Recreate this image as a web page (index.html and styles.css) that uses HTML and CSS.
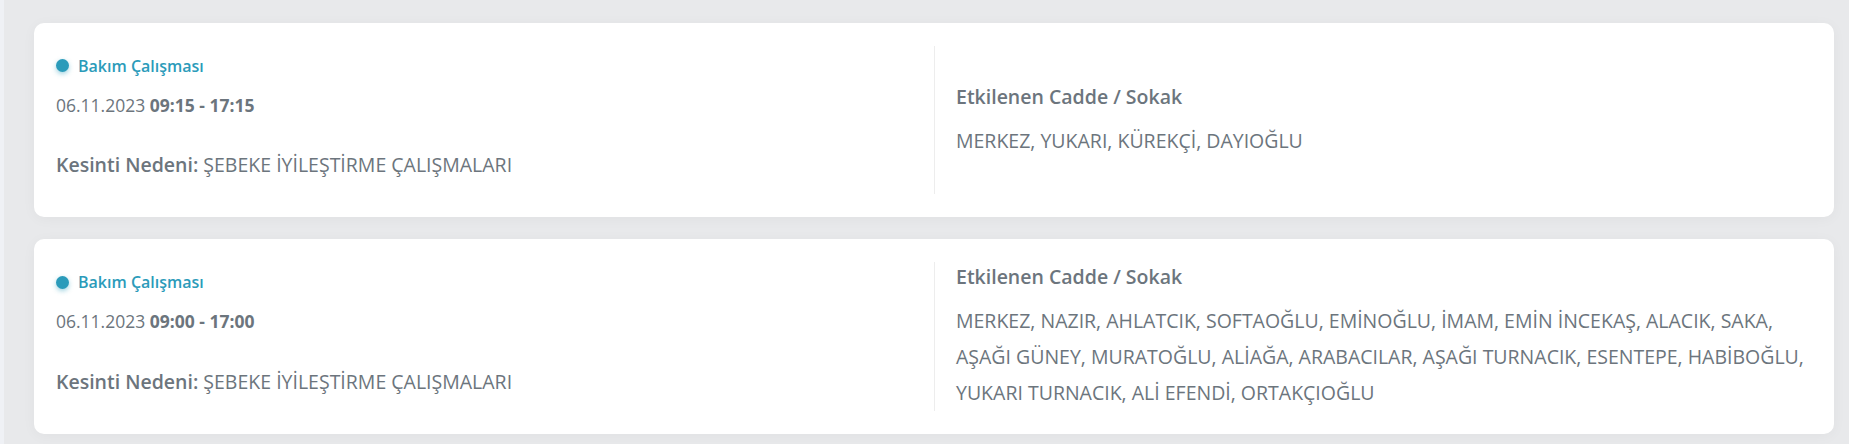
FILE: index.html
```html
<!DOCTYPE html>
<html lang="tr">
<head>
    <meta charset="UTF-8">
    <meta name="viewport" content="width=device-width, initial-scale=1.0">
    <title>Planlı Kesintiler</title>
    <link rel="stylesheet" href="styles.css">
</head>
<body>
    <div class="page">
        <!-- Kesinti 1 -->
        <div class="outage-card">
            <div class="outage-info">
                <p class="outage-type"><span class="dot"></span>Bakım Çalışması</p>
                <p class="outage-date">06.11.2023 <strong>09:15 - 17:15</strong></p>
                <p class="outage-reason"><strong>Kesinti Nedeni:</strong> ŞEBEKE İYİLEŞTİRME ÇALIŞMALARI</p>
            </div>
            <div class="outage-streets">
                <h3>Etkilenen Cadde / Sokak</h3>
                <p>MERKEZ, YUKARI, KÜREKÇİ, DAYIOĞLU</p>
            </div>
        </div>

        <!-- Kesinti 2 -->
        <div class="outage-card">
            <div class="outage-info">
                <p class="outage-type"><span class="dot"></span>Bakım Çalışması</p>
                <p class="outage-date">06.11.2023 <strong>09:00 - 17:00</strong></p>
                <p class="outage-reason"><strong>Kesinti Nedeni:</strong> ŞEBEKE İYİLEŞTİRME ÇALIŞMALARI</p>
            </div>
            <div class="outage-streets">
                <h3>Etkilenen Cadde / Sokak</h3>
                <p>MERKEZ, NAZIR, AHLATCIK, SOFTAOĞLU, EMİNOĞLU, İMAM, EMİN İNCEKAŞ, ALACIK, SAKA, AŞAĞI GÜNEY, MURATOĞLU, ALİAĞA, ARABACILAR, AŞAĞI TURNACIK, ESENTEPE, HABİBOĞLU, YUKARI TURNACIK, ALİ EFENDİ, ORTAKÇIOĞLU</p>
            </div>
        </div>
    </div>
</body>
</html>
```

FILE: styles.css
```css
body {
    margin: 0;
    font-family: "Open Sans", "Noto Sans", sans-serif;
    background-color: #e8e9eb;
    color: #6c757d;
}
.page {
    min-height: 444px;
    box-sizing: border-box;
    border-left: 4px solid #eff1f5;
    padding: 23px 15px 0 30px;
}
.outage-card {
    display: grid;
    grid-template-columns: 1fr 1fr;
    padding: 23px 22px;
    margin-bottom: 22px;
    background-color: #fff;
    border-radius: 10px;
    box-shadow: 0 2px 14px rgba(0, 0, 0, 0.04);
}
.outage-info {
    align-self: center;
}
.outage-info p {
    margin: 0;
}
.outage-type {
    display: flex;
    align-items: center;
    gap: 9px;
    font-size: 16px;
    line-height: 24px;
    font-weight: 600;
    color: #2b9bba;
}
.dot {
    width: 13px;
    height: 13px;
    border-radius: 50%;
    background-color: #2b9bba;
    box-shadow: 0 2px 5px rgba(43, 155, 186, 0.45);
}
.outage-info .outage-date {
    margin-top: 14px;
    font-size: 17.5px;
    line-height: 26px;
}
.outage-date strong {
    font-weight: 700;
}
.outage-info .outage-reason {
    margin: 32.5px 0 7px;
    font-size: 19.5px;
    line-height: 29px;
}
.outage-reason strong {
    font-weight: 600;
}
.outage-streets {
    min-height: 148px;
    display: flex;
    flex-direction: column;
    justify-content: center;
    border-left: 1px solid #ededed;
    padding-left: 21px;
}
.outage-streets h3 {
    margin: 0 0 12px;
    font-size: 19.5px;
    line-height: 29px;
    font-weight: 600;
}
.outage-streets p {
    margin: 0;
    font-size: 19.5px;
    line-height: 36px;
}
```
